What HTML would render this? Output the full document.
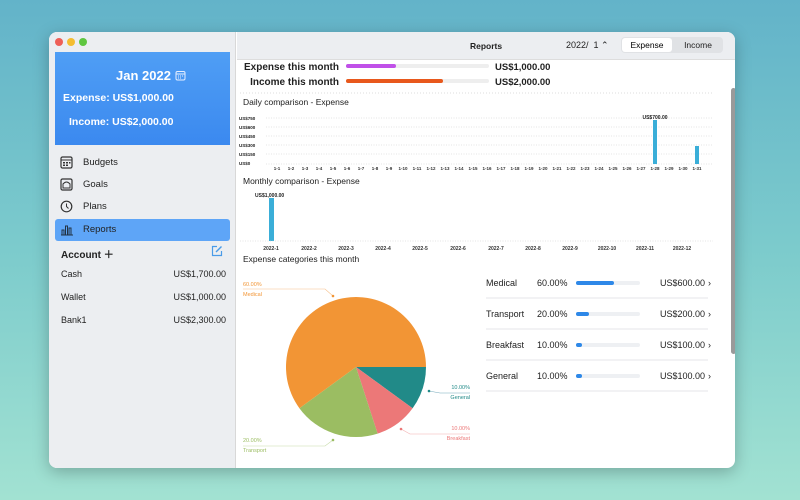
<!DOCTYPE html>
<html><head><meta charset="utf-8"><style>
*{margin:0;padding:0;box-sizing:border-box}
body{width:800px;height:500px;overflow:hidden;font-family:"Liberation Sans",sans-serif;background:linear-gradient(180deg,#63b3c9 0%,#7ccbcc 50%,#a2e2d2 100%);position:relative}
.win{position:absolute;left:49px;top:32px;width:686px;height:436px;border-radius:8px;overflow:hidden;background:#fff;box-shadow:0 4px 16px rgba(0,0,0,.25)}
.side{position:absolute;left:0;top:0;width:187px;height:436px;background:#eceef1;border-right:1px solid #d8d8d8}
.dot{position:absolute;top:6px;width:8px;height:8px;border-radius:50%}
.card{position:absolute;left:6px;top:20px;width:175px;height:93px;background:linear-gradient(#4f9ef5,#3b89ef);color:#fff;font-weight:bold}
.t{position:absolute;white-space:nowrap}
.nav{position:absolute;left:6px;width:175px;height:22px;font-size:9.5px;color:#222;border-radius:3px}
.nav span{position:absolute;left:28px;top:5px}
.nav svg{position:absolute;left:5px;top:4px}
.top{position:absolute;left:188px;top:0;right:0;height:28px;background:#eceef1;border-bottom:1px solid #ddd}
.s{font-size:9px;color:#222}
</style></head><body>
<div class="win">
<div class="side">
<div class="dot" style="left:6px;background:#ee5f57"></div>
<div class="dot" style="left:18px;background:#f4bd30"></div>
<div class="dot" style="left:30px;background:#5fc640"></div>
<div class="card">
<div class="t" style="left:61px;top:16px;font-size:13px">Jan 2022</div>
<svg class="t" style="left:120px;top:18px" width="11" height="11" viewBox="0 0 11 11"><rect x="1" y="1.5" width="9" height="8.5" rx="1.5" fill="none" stroke="#e6eeff" stroke-width="1"/><line x1="1" y1="4" x2="10" y2="4" stroke="#e6eeff"/><g fill="#e6eeff"><rect x="3" y="5.5" width="1" height="1"/><rect x="5" y="5.5" width="1" height="1"/><rect x="7" y="5.5" width="1" height="1"/><rect x="3" y="7.5" width="1" height="1"/><rect x="5" y="7.5" width="1" height="1"/></g></svg>
<div class="t" style="left:8px;top:40px;font-size:10.5px">Expense: US$1,000.00</div>
<div class="t" style="left:14px;top:64px;font-size:10.5px">Income: US$2,000.00</div>
</div>
<div class="nav" style="top:120px"><svg width="13" height="13" viewBox="0 0 13 13"><rect x="1" y="1" width="11" height="11" rx="1.5" fill="none" stroke="#333" stroke-width="1.2"/><line x1="1" y1="4" x2="12" y2="4" stroke="#333"/><g fill="#333"><rect x="3" y="6" width="2" height="1.5"/><rect x="6" y="6" width="2" height="1.5"/><rect x="9" y="6" width="1.5" height="1.5"/><rect x="3" y="8.5" width="2" height="1.5"/><rect x="6" y="8.5" width="2" height="1.5"/></g></svg><span>Budgets</span></div>
<div class="nav" style="top:142px"><svg width="13" height="13" viewBox="0 0 13 13"><rect x="1" y="1" width="11" height="11" rx="1.5" fill="none" stroke="#333" stroke-width="1.2"/><path d="M3 10 L3 6 Q6.5 2 10 6 L10 10 Z" fill="none" stroke="#333"/></svg><span>Goals</span></div>
<div class="nav" style="top:164px"><svg width="13" height="13" viewBox="0 0 13 13"><circle cx="6.5" cy="6.5" r="5.3" fill="none" stroke="#333" stroke-width="1.2"/><path d="M6.5 3.5 V6.5 L8.5 8.5" fill="none" stroke="#333"/></svg><span>Plans</span></div>
<div class="nav" style="top:187px;background:#5ea5f7"><svg width="14" height="13" viewBox="0 0 14 13"><path d="M1 12 H13 M2 12 V7 H4 V12 M5.5 12 V3 H7.5 V12 M9 12 V5 H11 V12" fill="none" stroke="#234" stroke-width="1"/></svg><span>Reports</span></div>
<div class="t" style="left:12px;top:214px;font-size:10px;font-weight:bold;color:#222">Account ＋</div>
<svg class="t" style="left:162px;top:213px" width="12" height="12" viewBox="0 0 12 12"><path d="M6 1.5 H1.5 V10.5 H10.5 V6" fill="none" stroke="#4a9be8" stroke-width="1.2"/><path d="M5 7 L10.5 1.5" stroke="#4a9be8" stroke-width="1.4"/></svg>
<div class="t s" style="left:12px;top:237px">Cash</div><div class="t s" style="right:9px;top:237px">US$1,700.00</div>
<div class="t s" style="left:12px;top:260px">Wallet</div><div class="t s" style="right:9px;top:260px">US$1,000.00</div>
<div class="t s" style="left:12px;top:283px">Bank1</div><div class="t s" style="right:9px;top:283px">US$2,300.00</div>
</div>
<div class="top">
<div class="t" style="left:233px;top:9px;font-size:8.5px;font-weight:bold;color:#222">Reports</div>
<div class="t" style="left:329px;top:8px;font-size:9px;color:#222">2022/ &nbsp;1 ⌃</div>
<div class="t" style="left:384px;top:5px;width:102px;height:16px;background:#e0e2e5;border-radius:4px"></div>
<div class="t" style="left:385px;top:6px;width:50px;height:14px;background:#fff;border-radius:3px;font-size:8.5px;text-align:center;line-height:14px">Expense</div>
<div class="t" style="left:436px;top:6px;width:50px;height:14px;font-size:8.5px;text-align:center;line-height:14px;color:#222">Income</div>
</div>
<div class="t" style="left:682px;top:56px;width:5px;height:266px;background:#9a9a9a;border-radius:3px"></div>
</div>
<svg width="800" height="500" style="position:absolute;left:0;top:0" font-family="Liberation Sans,sans-serif">
<text x="339" y="70" font-size="10" font-weight="bold" text-anchor="end" fill="#222">Expense this month</text>
<text x="339" y="85" font-size="10" font-weight="bold" text-anchor="end" fill="#222">Income this month</text>
<rect x="346" y="64" width="143" height="4" rx="2" fill="#eee"/><rect x="346" y="64" width="50" height="4" rx="2" fill="#c050e8"/>
<rect x="346" y="79" width="143" height="4" rx="2" fill="#eee"/><rect x="346" y="79" width="97" height="4" rx="2" fill="#e8581c"/>
<text x="495" y="70" font-size="9.5" font-weight="bold" fill="#222">US$1,000.00</text>
<text x="495" y="85" font-size="9.5" font-weight="bold" fill="#222">US$2,000.00</text>
<line x1="240" y1="93" x2="713" y2="93" stroke="#ddd" stroke-dasharray="1,2"/>
<text x="243" y="105" font-size="8.5" fill="#222">Daily comparison - Expense</text>
<g font-size="4.5" font-weight="bold" fill="#222" stroke="#ccc" stroke-width=".6" stroke-dasharray="1,1.5">
<text x="239" y="120" stroke="none">US$750</text><line x1="266" y1="118" x2="713" y2="118"/>
<text x="239" y="129" stroke="none">US$600</text><line x1="266" y1="127" x2="713" y2="127"/>
<text x="239" y="138" stroke="none">US$450</text><line x1="266" y1="136" x2="713" y2="136"/>
<text x="239" y="147" stroke="none">US$300</text><line x1="266" y1="145" x2="713" y2="145"/>
<text x="239" y="156" stroke="none">US$150</text><line x1="266" y1="154" x2="713" y2="154"/>
<text x="239" y="165" stroke="none">US$0</text><line x1="266" y1="164" x2="713" y2="164"/>
</g>
<g font-size="4.5" font-weight="bold" fill="#333" text-anchor="middle" id="dx"></g>
<rect x="653" y="120" width="4" height="44" fill="#3aaed8"/>
<rect x="695" y="146" width="4" height="18" fill="#3aaed8"/>
<text x="655" y="119" font-size="5" font-weight="bold" text-anchor="middle" fill="#222">US$700.00</text>
<text x="243" y="184" font-size="8.5" fill="#222">Monthly comparison - Expense</text>
<rect x="269" y="198" width="5" height="43" fill="#3aaed8"/>
<text x="255" y="197" font-size="5" font-weight="bold" fill="#222">US$1,000.00</text>
<line x1="240" y1="241" x2="713" y2="241" stroke="#ccc" stroke-width=".6" stroke-dasharray="1,1.5"/>
<g font-size="5" font-weight="bold" fill="#333" text-anchor="middle">
<text x="271" y="250">2022-1</text><text x="309" y="250">2022-2</text><text x="346" y="250">2022-3</text><text x="383" y="250">2022-4</text><text x="420" y="250">2022-5</text><text x="458" y="250">2022-6</text><text x="496" y="250">2022-7</text><text x="533" y="250">2022-8</text><text x="570" y="250">2022-9</text><text x="607" y="250">2022-10</text><text x="645" y="250">2022-11</text><text x="682" y="250">2022-12</text>
</g>
<text x="243" y="262" font-size="8.5" fill="#222">Expense categories this month</text>
<path d="M356,367 L426,367 A70,70 0 0 1 412.6,408.2 Z" fill="#218a88"/>
<path d="M356,367 L412.6,408.2 A70,70 0 0 1 377.6,433.6 Z" fill="#ec7878"/>
<path d="M356,367 L377.6,433.6 A70,70 0 0 1 299.4,408.2 Z" fill="#9bbd62"/>
<path d="M356,367 L299.4,408.2 A70,70 0 1 1 426,367 Z" fill="#f29535"/>
<g font-size="5.5">
<text x="243" y="286" fill="#f29535">60.00%</text><text x="243" y="296" fill="#f29535">Medical</text>
<polyline points="243,289 325,289 333,296" fill="none" stroke="#f7c08a" stroke-width=".6"/><circle cx="333" cy="296" r="1.3" fill="#f29535"/>
<text x="243" y="442" fill="#9bbd62">20.00%</text><text x="243" y="452" fill="#9bbd62">Transport</text>
<polyline points="243,446 325,446 333,440" fill="none" stroke="#c7dba8" stroke-width=".6"/><circle cx="333" cy="440" r="1.3" fill="#9bbd62"/>
<text x="470" y="389" text-anchor="end" fill="#218a88">10.00%</text><text x="470" y="399" text-anchor="end" fill="#218a88">General</text>
<polyline points="429,391 440,393 470,393" fill="none" stroke="#7ab" stroke-width=".6"/><circle cx="429" cy="391" r="1.3" fill="#218a88"/>
<text x="470" y="430" text-anchor="end" fill="#ec7878">10.00%</text><text x="470" y="440" text-anchor="end" fill="#ec7878">Breakfast</text>
<polyline points="401,429 410,434 470,434" fill="none" stroke="#f3b0b0" stroke-width=".6"/><circle cx="401" cy="429" r="1.3" fill="#ec7878"/>
</g>
<g font-size="9" fill="#222">
<text x="486" y="286">Medical</text><text x="537" y="286">60.00%</text><rect x="576" y="281" width="64" height="4" rx="2" fill="#eef0f3"/><rect x="576" y="281" width="38" height="4" rx="2" fill="#2e88e8"/><text x="705" y="286" text-anchor="end">US$600.00</text><text x="708" y="286">›</text>
<line x1="486" y1="298" x2="708" y2="298" stroke="#e4e6ea"/>
<text x="486" y="317">Transport</text><text x="537" y="317">20.00%</text><rect x="576" y="312" width="64" height="4" rx="2" fill="#eef0f3"/><rect x="576" y="312" width="13" height="4" rx="2" fill="#2e88e8"/><text x="705" y="317" text-anchor="end">US$200.00</text><text x="708" y="317">›</text>
<line x1="486" y1="329" x2="708" y2="329" stroke="#e4e6ea"/>
<text x="486" y="348">Breakfast</text><text x="537" y="348">10.00%</text><rect x="576" y="343" width="64" height="4" rx="2" fill="#eef0f3"/><rect x="576" y="343" width="6" height="4" rx="2" fill="#2e88e8"/><text x="705" y="348" text-anchor="end">US$100.00</text><text x="708" y="348">›</text>
<line x1="486" y1="360" x2="708" y2="360" stroke="#e4e6ea"/>
<text x="486" y="379">General</text><text x="537" y="379">10.00%</text><rect x="576" y="374" width="64" height="4" rx="2" fill="#eef0f3"/><rect x="576" y="374" width="6" height="4" rx="2" fill="#2e88e8"/><text x="705" y="379" text-anchor="end">US$100.00</text><text x="708" y="379">›</text>
<line x1="486" y1="391" x2="708" y2="391" stroke="#e4e6ea"/>
</g>
</svg>
<script>
var g=document.getElementById('dx'),h='';
for(var i=1;i<=31;i++){h+='<text x="'+(277+(i-1)*14)+'" y="170">1-'+i+'</text>';}
g.innerHTML=h;
</script>
</body></html>
